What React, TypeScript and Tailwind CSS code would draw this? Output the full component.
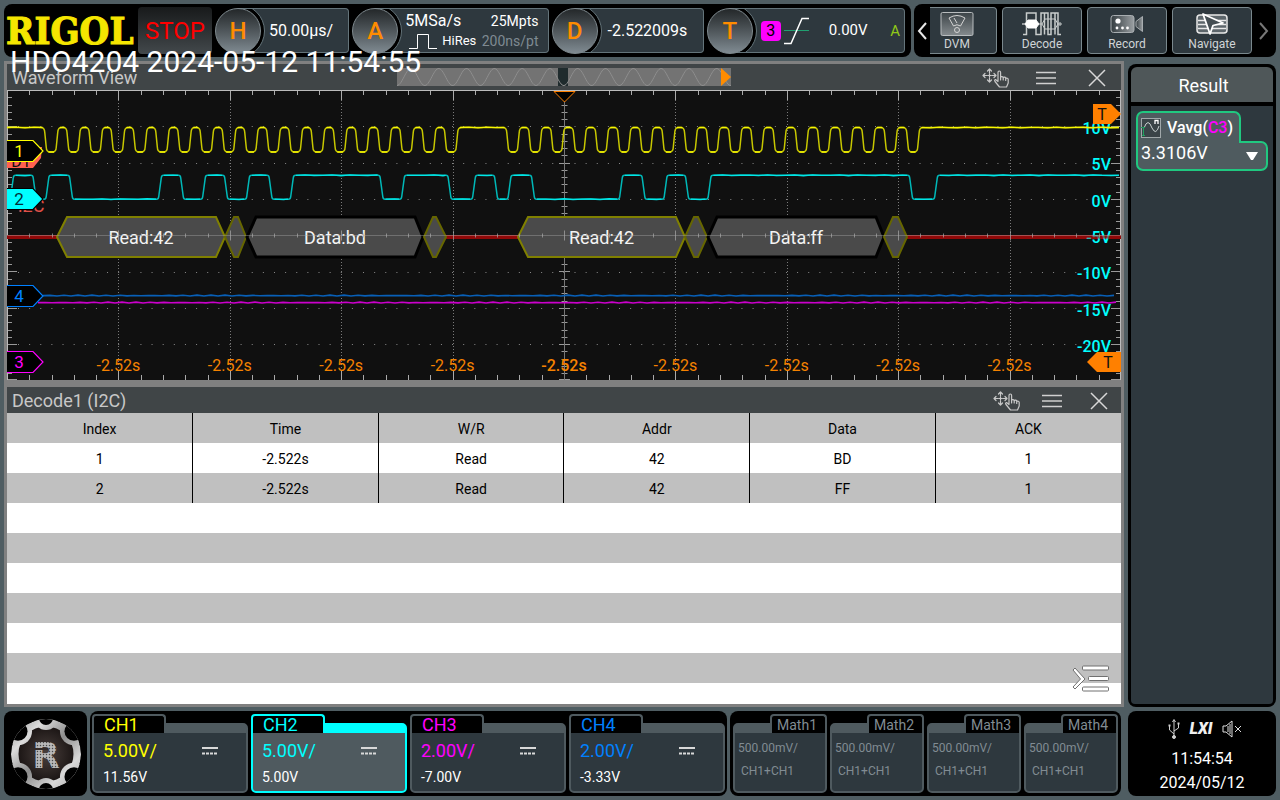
import React from "react";

/* ---------- shared values ---------- */

const PLOT_W = 1114;
const PLOT_H = 290;
const DIV_X = 111.4;
const DIV_Y = 36.3;

const channels = [
  { name: "CH1", scale: "5.00V/", offset: "11.56V", color: "text-[#ffff00]", active: false },
  { name: "CH2", scale: "5.00V/", offset: "5.00V", color: "text-[#00ffff]", active: true },
  { name: "CH3", scale: "2.00V/", offset: "-7.00V", color: "text-[#ff00ff]", active: false },
  { name: "CH4", scale: "2.00V/", offset: "-3.33V", color: "text-[#0080ff]", active: false },
];

const maths = ["Math1", "Math2", "Math3", "Math4"];

const columns = ["Index", "Time", "W/R", "Addr", "Data", "ACK"];
const rows = [
  ["1", "-2.522s", "Read", "42", "BD", "1"],
  ["2", "-2.522s", "Read", "42", "FF", "1"],
];

/* ---------- waveform helpers ---------- */

type Edge = number;

function jitter(i: number) {
  return Math.sin(i * 12.9898) * 0.45;
}

function edgePath(edges: Edge[], startHigh: boolean, hi: number, lo: number, slope: number, round: number) {
  let high = startHigh;
  let d = `M0 ${high ? hi : lo}`;
  for (const x of edges) {
    const from = high ? hi : lo;
    const to = high ? lo : hi;
    const s = Math.sign(to - from) * round * 1.4;
    d += ` L${x - slope - round} ${from} Q${x - slope} ${from} ${x - slope * 0.8} ${from + s}`;
    d += ` L${x + slope * 0.8} ${to - s} Q${x + slope} ${to} ${x + slope + round} ${to}`;
    high = !high;
  }
  return d + ` L${PLOT_W - 2} ${high ? hi : lo}`;
}

function flatPath(edges: Edge[], startHigh: boolean, hi: number, lo: number, pad: number) {
  let high = startHigh;
  let from = 0;
  let d = "";
  [...edges, PLOT_W + pad - 2].forEach((x, i) => {
    const y = high ? hi : lo;
    d += `M${from} ${y}`;
    for (let p = from + 9; p < x - pad; p += 9) d += ` L${p} ${y + jitter(p + i)}`;
    d += ` L${x - pad} ${y} `;
    from = x + pad;
    high = !high;
  });
  return d;
}

function noisyLine(from: number, y: number) {
  let d = `M${from} ${y}`;
  for (let x = from + 7; x < PLOT_W - 2; x += 7) d += ` L${x} ${y + jitter(x)}`;
  return d;
}

const clockEdges: Edge[] = [];
for (let n = 0; n <= 18; n++) clockEdges.push(38.5 + n * 22.22, 50 + n * 22.22);
for (let n = 0; n <= 18; n++) clockEdges.push(500.5 + n * 22.22, 511.5 + n * 22.22);

const dataEdges: Edge[] = [
  5, 27.5, 40.5, 64, 153, 175, 197, 219, 241, 263.5, 285, 374.5, 396, 442.5, 467, 489, 502.5, 526, 614, 636.5,
  658.5, 680, 702.5, 904, 929,
];

/* ---------- graticule ---------- */

function Graticule() {
  const items: React.ReactNode[] = [];
  for (let i = 1; i < 10; i++) {
    const x = Math.round(i * DIV_X) + 0.5;
    if (i !== 5)
      items.push(
        <line key={`v${i}`} x1={x} x2={x} y1={1} y2={PLOT_H} stroke="#7a7a7a" strokeDasharray="1 2" />,
      );
  }
  for (let k = 1; k < 8; k++) {
    if (k === 4) continue;
    const y = Math.round(k * DIV_Y) + 0.5;
    items.push(
      <line key={`h${k}`} x1={11} x2={PLOT_W} y1={y} y2={y} stroke="#8a8a8a" strokeDasharray="1 10.13" />,
    );
  }
  for (let i = 0; i <= 50; i++) {
    const x = Math.min(Math.round((i * DIV_X) / 5) + 0.5, PLOT_W - 0.5);
    const len = i % 5 === 0 ? 10 : 5;
    items.push(<line key={`t${i}`} x1={x} x2={x} y1={0} y2={len} stroke="#aaaaaa" />);
    items.push(<line key={`b${i}`} x1={x} x2={x} y1={PLOT_H - len} y2={PLOT_H} stroke="#aaaaaa" />);
  }
  for (let k = 0; k <= 40; k++) {
    const y = Math.min(Math.round((k * DIV_Y) / 5) + 0.5, PLOT_H - 0.5);
    const len = k % 5 === 0 ? 10 : 5;
    items.push(<line key={`l${k}`} x1={0} x2={len} y1={y} y2={y} stroke="#999999" />);
    items.push(<line key={`r${k}`} x1={PLOT_W - len} x2={PLOT_W} y1={y} y2={y} stroke="#999999" />);
    items.push(<line key={`c${k}`} x1={557 - len / 2} x2={558 + len / 2} y1={y} y2={y} stroke="#999999" />);
  }
  return (
    <g strokeWidth="1">
      {items}
      <line x1="557.5" x2="557.5" y1="0" y2={PLOT_H} stroke="#777777" />
      <line x1="0" x2={PLOT_W} y1="0.5" y2="0.5" stroke="#bbbbbb" />
      <line x1={PLOT_W - 0.5} x2={PLOT_W - 0.5} y1="0" y2={PLOT_H} stroke="#bbbbbb" />
      <line x1="0.5" x2="0.5" y1="0" y2={PLOT_H} stroke="#bbbbbb" />
    </g>
  );
}

function CenterAxis() {
  const ticks: React.ReactNode[] = [];
  for (let i = 1; i < 50; i++) {
    const x = Math.round((i * DIV_X) / 5) + 0.5;
    const h = i % 5 === 0 ? 5 : 2;
    ticks.push(<line key={i} x1={x} x2={x} y1={145.5 - h} y2={145.5 + h} />);
  }
  return (
    <g stroke="#aaaaaa" strokeOpacity="0.7">
      <line x1="0" x2={PLOT_W} y1="145.5" y2="145.5" strokeOpacity="0.4" />
      {ticks}
    </g>
  );
}

type PacketProps = { a: number; b: number; c: number; d: number; stroke: string; width?: number; label?: string };

function Packet({ a, b, c, d, stroke, width = 2, label }: PacketProps) {
  return (
    <g>
      <path
        d={`M${a} 147 L${b} 127 H${c} L${d} 147 L${c} 167 H${b} Z`}
        fill="#4a4a4a"
        stroke={stroke}
        strokeWidth={width}
      />
      {label && (
        <text x={(a + d) / 2} y="154" textAnchor="middle" fontSize="18" fill="#f4f4f4">
          {label}
        </text>
      )}
    </g>
  );
}

function Flag({ y, fill, stroke, text, label }: { y: number; fill: string; stroke: string; text: string; label: string }) {
  return (
    <g>
      <path d={`M0 ${y - 10.5} H26 L36 ${y} L26 ${y + 10.5} H0`} fill={fill} stroke={stroke} strokeWidth="1.2" />
      <text x="12" y={y + 6} textAnchor="middle" fontSize="17" fill={text}>
        {label}
      </text>
    </g>
  );
}

function Plot() {
  const voltages: [string, number][] = [
    ["10V", 44],
    ["5V", 80],
    ["0V", 117],
    ["-5V", 153],
    ["-10V", 189],
    ["-15V", 226],
    ["-20V", 262],
  ];
  return (
    <svg viewBox={`0 0 ${PLOT_W} ${PLOT_H}`} className="block w-full bg-[#101010]" role="img" aria-label="Waveforms">
      <Graticule />
      <path d="M0 145.5 H52 M439 145.5 H512 M900 145.5 H1114" stroke="#a01818" />
      <path d="M0 147.5 H52 M439 147.5 H512 M900 147.5 H1114" stroke="#900808" strokeWidth="3" />
      {voltages.map(([t, y]) => (
        <text key={t} x="1104" y={y} textAnchor="end" fontSize="16" fontWeight="500" fill="#00ffff">
          {t}
        </text>
      ))}
      <path d="M1070 147 H1114" stroke="#900808" strokeWidth="3" strokeOpacity="0.6" />
      <Packet a={50} b={60} c={209} d={218} stroke="#808000" label="Read:42" />
      <Packet a={218} b={227} c={231} d={239} stroke="#666600" />
      <Packet a={240} b={249} c={408} d={416} stroke="#000000" width={3} label="Data:bd" />
      <Packet a={417} b={426} c={429} d={439} stroke="#666600" />
      <Packet a={511} b={521} c={669} d={678} stroke="#808000" label="Read:42" />
      <Packet a={678} b={687} c={691} d={700} stroke="#666600" />
      <Packet a={701} b={710} c={869} d={877} stroke="#000000" width={3} label="Data:ff" />
      <Packet a={877} b={886} c={891} d={900} stroke="#666600" />
      <CenterAxis />

      <g fill="none">
        <path d={noisyLine(31, 212.6)} stroke="#cc00cc" strokeWidth="1.6" />
        <path d={noisyLine(36, 205.6)} stroke="#0860b8" strokeWidth="1.6" />
        <path d={edgePath(dataEdges, false, 85.3, 109.2, 1.6, 1.8)} stroke="#00b8b8" strokeWidth="1.5" />
        <path d={flatPath(dataEdges, false, 85.3, 109.2, 4)} stroke="#00e8e8" strokeWidth="1.3" />
        <path d={edgePath(clockEdges, true, 37.5, 62, 0.9, 3.6)} stroke="#c8c800" strokeWidth="1.5" />
        <path d={flatPath(clockEdges, true, 37.5, 62, 3)} stroke="#f8f800" strokeWidth="1.3" />
      </g>

      {Array.from({ length: 9 }, (_, i) => (
        <text
          key={i}
          x={(i + 1) * DIV_X}
          y="281"
          textAnchor="middle"
          fontSize="16"
          fontWeight={i === 4 ? 500 : 400}
          fill="#f58200"
        >
          -2.52s
        </text>
      ))}

      <path d="M547 1.5 H568 L557.5 12 Z" fill="#000000" stroke="#ff8000" />

      <g>
        <path d="M0 57 H35 L34 68 L26 78 H0 Z" fill="#ff6050" />
        <text x="14" y="77" textAnchor="middle" fontSize="16" fill="#101010">
          D1
        </text>
        <text x="24" y="122" textAnchor="middle" fontSize="18" fill="#e05048">
          I2C
        </text>
      </g>
      <Flag y={61} fill="#000000" stroke="#ffff00" text="#ffff00" label="1" />
      <Flag y={109} fill="#00ffff" stroke="#000000" text="#003038" label="2" />
      <Flag y={206} fill="#000000" stroke="#0080ff" text="#0080ff" label="4" />
      <Flag y={272} fill="#000000" stroke="#ff00ff" text="#ff00ff" label="3" />

      <path d="M1086 14 H1104 L1114 24 L1104 34 H1086 Z" fill="#ff8000" />
      <text x="1095" y="30" textAnchor="middle" fontSize="16" fill="#101010">
        T
      </text>
      <path d="M1114 262 H1090 L1080 272 L1090 282 H1114 Z" fill="#ff8000" />
      <text x="1101" y="278" textAnchor="middle" fontSize="16" fill="#101010">
        T
      </text>
    </svg>
  );
}

/* ---------- icons ---------- */

function MoveHandIcon() {
  return (
    <svg width="28" height="20" viewBox="0 0 28 20" fill="none" stroke="#c8c8c8" strokeWidth="1.2" strokeLinejoin="round" strokeLinecap="round">
      <path d="M7.500 1 V5 M7.500 10 V14 M1 7.500 H5 M10 7.500 H14 M6 7.500 H9 M7.500 6 V9 M5.500 3 L7.500 1 L9.500 3 M5.500 12 L7.500 14 L9.500 12 M3 5.500 L1 7.500 L3 9.500 M12 5.500 L14 7.500 L12 9.500" />
      <path d="M17.500 19 L13 13.500 Q12 12 13.500 11.500 L16 13.500 V4.500 Q16 3 17.300 3 T18.600 4.500 V9.500 Q18.800 8.500 20 8.600 T21.200 10 Q21.500 9 22.700 9.200 T23.700 10.600 Q24.300 9.800 25.300 10.200 T26.200 11.500 V15 L24.500 19 Z M18.600 9.500 V12 M21.200 10 V12 M23.700 10.600 V12.500" />
    </svg>
  );
}

function WindowControls({ name, compact = false }: { name: string; compact?: boolean }) {
  return (
    <>
      <button aria-label={`Move ${name}`}>
        <MoveHandIcon />
      </button>
      <button aria-label={`${name} menu`} className={compact ? "ml-[21px]" : "ml-[26px]"}>
        <svg width="20" height="14" viewBox="0 0 20 14" stroke="#d0d0d0" strokeWidth="1.5">
          <path d="M0 1.500 H20 M0 7 H20 M0 12.500 H20" />
        </svg>
      </button>
      <button aria-label={`Close ${name}`} className={compact ? "ml-[28px]" : "ml-[32px]"}>
        <svg width="18" height="18" viewBox="0 0 18 18" stroke="#d8d8d8" strokeWidth="1.5">
          <path d="M1 1 L17 17 M17 1 L1 17" />
        </svg>
      </button>
    </>
  );
}

function DvmIcon() {
  return (
    <svg width="34" height="24" viewBox="0 0 34 24" fill="none">
      <defs>
        <linearGradient id="meter" x1="0" x2="0" y1="0" y2="1">
          <stop offset="0" stopColor="#3c4448" />
          <stop offset="1" stopColor="#858b8e" />
        </linearGradient>
      </defs>
      <rect x="1" y="0.500" width="32" height="23" rx="1.500" fill="url(#meter)" stroke="#b8bcbe" />
      <path d="M9 6 Q17 1 25 6 L20.500 14 Q17 11.500 13.500 14 Z" stroke="#d4d4d4" strokeLinejoin="round" />
      <path d="M14 6 L17 11" stroke="#d4d4d4" />
      <circle cx="17" cy="18" r="2.500" stroke="#d4d4d4" />
    </svg>
  );
}

function DecodeIcon() {
  return (
    <svg width="40" height="24" viewBox="0 0 40 24" fill="none" stroke="#c8cccc">
      <path d="M1 22.500 H4.500 V1 H14 V22.500 H19 V1 H26 V22.500 H29 V1 H36 V22.500 H39 M22.500 1 V22.500 M33 1 V22.500" strokeWidth="1.500" />
      <path d="M0 12 H3 L6 8 H14 L17 12 L14 16 H6 L3 12" fill="#ffffff" stroke="#ffffff" />
      <path d="M17 12 H20 L23 7 H33 L36 12 L33 17 H23 L20 12 M36 12 H40 M38 10 V14" strokeWidth="1" />
    </svg>
  );
}

function RecordIcon() {
  return (
    <svg width="34" height="18" viewBox="0 0 34 18" fill="none">
      <defs>
        <linearGradient id="camera" x1="0" x2="1">
          <stop offset="0" stopColor="#343c40" />
          <stop offset="1" stopColor="#9a9fa2" />
        </linearGradient>
      </defs>
      <rect x="1" y="0.500" width="23" height="17" rx="2.500" fill="url(#camera)" stroke="#a8adb0" />
      <path d="M26 6.500 L32.500 1.500 V16.500 L26 11.500 Z" fill="url(#camera)" stroke="#a8adb0" />
      <circle cx="8" cy="6" r="2.600" fill="#ffffff" />
      <g fill="#ffffff">
        <circle cx="7" cy="13" r="1.400" />
        <circle cx="12.500" cy="13" r="1.400" />
        <circle cx="17.500" cy="13" r="1.400" />
      </g>
    </svg>
  );
}

function NavigateIcon() {
  return (
    <svg width="34" height="22" viewBox="0 0 34 22" fill="none" stroke="#e8e8e8">
      <rect x="2" y="2" width="30" height="18" rx="3" fill="#5d666b" strokeWidth="1.500" />
      <path d="M3 7.500 H31 M3 11.500 H31 M3 15.500 H31" strokeWidth="1.300" />
      <path d="M8 1 L28 10 L18 12.500 L15 21 Z" fill="#454e53" stroke="#ffffff" strokeWidth="1.800" strokeLinejoin="round" />
    </svg>
  );
}

function GearLogo() {
  const angles = [90, 270, 39, 141, 219, 321];
  const at = (a: number, r: number) => ({
    cx: 36 + r * Math.cos((a * Math.PI) / 180),
    cy: 36 + r * Math.sin((a * Math.PI) / 180),
  });
  return (
    <svg width="72" height="72" viewBox="0 0 72 72">
      <defs>
        <linearGradient id="steel" gradientUnits="userSpaceOnUse" x1="0" x2="72" y1="0" y2="72">
          <stop offset="0" stopColor="#8a8a8a" />
          <stop offset="0.25" stopColor="#dcdcdc" />
          <stop offset="0.5" stopColor="#8c8c8c" />
          <stop offset="0.75" stopColor="#d8d8d8" />
          <stop offset="1" stopColor="#a0a0a0" />
        </linearGradient>
        <radialGradient id="core">
          <stop offset="0" stopColor="#4a403d" />
          <stop offset="1" stopColor="#1c1615" />
        </radialGradient>
        <clipPath id="disc">
          <circle cx="36" cy="36" r="35" />
        </clipPath>
        <pattern id="mesh" width="3" height="3" patternUnits="userSpaceOnUse">
          <rect width="3" height="3" fill="#a8a8a8" />
          <rect width="1" height="1" fill="#484848" />
          <rect x="1.500" y="1.500" width="1" height="1" fill="#e8e8e8" />
        </pattern>
      </defs>
      <g clipPath="url(#disc)">
        <circle cx="36" cy="36" r="35" fill="url(#steel)" />
        <circle cx="36" cy="36" r="27.500" fill="url(#core)" />
        {angles.map((a) => (
          <circle key={a} {...at(a, 36)} r={a % 90 ? 14 : 12} fill="url(#steel)" />
        ))}
        {angles.map((a) => (
          <circle key={a} {...at(a, 36)} r={a % 90 ? 9.5 : 7} fill="#000000" />
        ))}
      </g>
      <text x="36" y="50" textAnchor="middle" fontSize="36" fontWeight="700" fill="url(#mesh)" fontFamily="DejaVu Sans">
        R
      </text>
      <path d="M20 31 H38" stroke="#332b29" strokeWidth="2" />
    </svg>
  );
}

/* ---------- top bar ---------- */

function Knob({ letter, label, basis, children }: { letter: string; label: string; basis: string; children: React.ReactNode }) {
  return (
    <div className={`flex grow items-center ${basis}`}>
      <button
        aria-label={label}
        className="z-10 flex size-[46px] shrink-0 items-center justify-center rounded-full border border-[#7f8a8f] bg-linear-to-b from-[#24282a] to-[#808b92] text-2xl font-medium text-[#ff8c00]"
      >
        {letter}
      </button>
      <div className="relative -ml-[23px] flex h-[45px] grow items-center overflow-hidden rounded-r-[4px] border border-l-0 border-[#64747a] bg-[#2e383e] pl-[31px]">
        <span className="absolute top-1/2 -left-[27px] size-[54px] -translate-y-1/2 rounded-full border border-[#64747a] bg-black" />
        {children}
      </div>
    </div>
  );
}

function ToolButton({ label, icon, className }: { label: string; icon: React.ReactNode; className: string }) {
  return (
    <button
      className={`flex h-[47px] flex-col items-center justify-between border border-[#7a888d] bg-[#2e383e] pt-1 pb-[2px] text-xs leading-[14px] text-[#d0d4d6] ${className}`}
    >
      <span className="flex h-6 items-center">{icon}</span>
      {label}
    </button>
  );
}

function TopBar() {
  return (
    <header className="flex gap-[3px]">
      <div className="flex h-[53px] grow items-center gap-[3px] rounded-[8px] bg-black pr-[6px]">
        <div className="-mr-[3px] w-[134px] pl-[2px] font-['DejaVu_Serif_Condensed','DejaVu_Serif',serif] text-[38px] leading-none font-bold text-[#f5e600] [-webkit-text-stroke:1px_#f5e600]">
          RIGOL
        </div>
        <button className="h-[47px] w-[74px] rounded-[4px] bg-linear-to-b from-[#181a1b] to-[#43494c] pt-px text-2xl text-[#ff0000]">
          STOP
        </button>
        <Knob letter="H" label="Horizontal" basis="basis-[134px]">
          50.00µs/
        </Knob>
        <Knob letter="A" label="Acquire" basis="basis-[196px]">
          <div className="-ml-px flex grow flex-col pt-px pr-[9px] leading-5">
            <div className="flex items-baseline justify-between">
              <span>5MSa/s</span>
              <span className="text-sm leading-5">25Mpts</span>
            </div>
            <div className="flex items-center justify-between">
              <span className="flex items-center gap-[5px] pl-1 text-[13px] leading-5">
                <svg width="28" height="15" viewBox="0 0 28 15" fill="none" stroke="#ffffff">
                  <path d="M0 14.500 H8.500 V0.500 H19.500 V14.500 H28" />
                </svg>
                HiRes
              </span>
              <span className="text-sm leading-5 text-[#7f8a92]">200ns/pt</span>
            </div>
          </div>
        </Knob>
        <Knob letter="D" label="Delay" basis="basis-[152px]">
          <span className="pl-[2px]">-2.522009s</span>
        </Knob>
        <Knob letter="T" label="Trigger" basis="basis-[198px]">
          <span className="flex size-5 items-center justify-center rounded-[4px] bg-[#ff00ff] pt-px text-black">3</span>
          <svg className="ml-[3px]" width="26" height="28" viewBox="0 0 26 28" fill="none">
            <path d="M0 13.500 H25" stroke="#20a070" />
            <path d="M0 26.500 H7 L18 1.500 H25" stroke="#ffffff" strokeWidth="1.500" />
          </svg>
          <span className="ml-[19px] text-[15px]">0.00V</span>
          <span className="mr-1 ml-auto pt-px text-[15px] text-[#90c818]">A</span>
        </Knob>
      </div>
      <nav className="flex h-[53px] w-[362px] shrink-0 items-center rounded-[8px] bg-black">
        <button aria-label="Previous tools" className="flex w-4 shrink-0 justify-center">
          <svg width="10" height="18" viewBox="0 0 10 18" fill="none" stroke="#e8e8e8" strokeWidth="2">
            <path d="M9 1 L2 9 L9 17" />
          </svg>
        </button>
        <div className="flex grow gap-[5px]">
          <ToolButton label="DVM" icon={<DvmIcon />} className="w-[67px] rounded-r-[4px] border-l-0 pr-3" />
          <ToolButton label="Decode" icon={<DecodeIcon />} className="flex-1 rounded-[4px]" />
          <ToolButton label="Record" icon={<RecordIcon />} className="flex-1 rounded-[4px]" />
          <ToolButton label="Navigate" icon={<NavigateIcon />} className="flex-1 rounded-[4px]" />
        </div>
        <button aria-label="Next tools" className="flex w-6 shrink-0 justify-center">
          <svg width="10" height="18" viewBox="0 0 10 18" fill="none" stroke="#777777" strokeWidth="2">
            <path d="M1 1 L8 9 L1 17" />
          </svg>
        </button>
      </nav>
    </header>
  );
}

/* ---------- main panels ---------- */

function Overview() {
  let d = "";
  for (let x = 0; x <= 334; x += 1) d += `${x ? "L" : "M"}${x} ${(9 + 8.5 * Math.cos((x / 27.8) * 2 * Math.PI)).toFixed(1)} `;
  return (
    <svg width="334" height="18" viewBox="0 0 334 18" fill="none" role="img" aria-label="Record memory">
      <rect width="334" height="18" fill="#737373" />
      <rect x="161" width="10" height="18" fill="#1f2b2d" />
      <path d={d} stroke="#8e8e8e" />
      <path d="M324 0 L334 9 L324 18 Z" fill="#ff8c00" />
    </svg>
  );
}

function WaveformPanel() {
  return (
    <section>
      <div className="grid h-[26px] grid-cols-[1fr_auto_1fr] items-center bg-[#404547]">
        <h2 className="pt-[2px] pl-[5px] text-lg leading-6 text-[#c8c8c8]">Waveform View</h2>
        <Overview />
        <div className="flex items-center justify-end pt-[2px] pr-[15px]">
          <WindowControls name="waveform view" />
        </div>
      </div>
      <Plot />
    </section>
  );
}

function DecodePanel() {
  return (
    <section className="relative flex grow flex-col bg-white text-black">
      <div className="flex h-[26px] items-center justify-between bg-[#404547] pt-[2px] pr-[13px] pl-[5px]">
        <h2 className="text-lg leading-6 text-[#c8c8c8]">Decode1 (I2C)</h2>
        <div className="flex items-center">
          <WindowControls name="decode" compact />
        </div>
      </div>
      <table className="w-full table-fixed border-collapse text-center text-sm">
        <thead>
          <tr className="h-[30px] bg-[#c0c0c0]">
            {columns.map((c) => (
              <th key={c} className="border-r border-black p-0 pt-[2px] font-normal last:border-r-0">
                {c}
              </th>
            ))}
          </tr>
        </thead>
        <tbody>
          {rows.map((r) => (
            <tr key={r[0]} className="h-[30px] even:bg-[#c0c0c0]">
              {r.map((v, i) => (
                <td key={i} className="border-r border-black p-0 pt-[2px] last:border-r-0">
                  {v}
                </td>
              ))}
            </tr>
          ))}
          {[0, 1, 2, 3, 4, 5].map((n) => (
            <tr key={n} className="h-[30px] even:bg-[#c0c0c0]">
              <td colSpan={6} className="p-0" />
            </tr>
          ))}
        </tbody>
      </table>
      <button aria-label="Expand list" className="absolute right-[11px] bottom-[11px]">
        <svg width="38" height="28" viewBox="0 0 38 28" fill="#ffffff" stroke="#707070">
          <path d="M3 3 L13 14 L3 24 L1 22 L8.500 14 L1 5 Z" />
          <rect x="10.500" y="1" width="26" height="4" rx="1" />
          <rect x="16.500" y="11.500" width="20" height="4" rx="1" />
          <rect x="10.500" y="22" width="26" height="4" rx="1" />
        </svg>
      </button>
    </section>
  );
}

function ResultPanel() {
  return (
    <aside className="mt-[3px] flex w-[148px] shrink-0 flex-col gap-1 rounded-[8px] bg-black p-[3px]">
      <h2 className="flex h-[35px] items-center justify-center rounded-t-[6px] bg-[#4f5759] pt-[2px] pl-[3px] text-lg text-white">Result</h2>
      <div className="grow rounded-b-[4px] bg-[#2e383e] p-[5px]">
        <div className="relative z-10 -mb-[2px] flex h-8 w-[105px] items-center gap-[6px] rounded-t-[7px] border-2 border-b-0 border-[#20c880] bg-[#4f5b5f] pl-[3px] text-base font-medium">
          <svg width="20" height="20" viewBox="0 0 20 20" fill="none">
            <rect x="0.500" y="0.500" width="19" height="19" stroke="#a0a8aa" fill="#3a4448" />
            <path d="M3 10 Q7 -1 11 10 Q15 18 18 8" stroke="#c8d0d0" />
            <path d="M0 9.500 H4 M2.500 10 V17 M1 17.500 H4" stroke="#20a060" />
            <path d="M14 6 V2.500 H17 V6" stroke="#ffffff" strokeWidth="1.300" />
          </svg>
          <span>
            Vavg(<span className="text-[#ff00ff]">C3</span>)
          </span>
        </div>
        <button className="flex h-[30px] w-full items-center justify-between rounded-r-[7px] rounded-bl-[7px] border-2 border-[#20c880] bg-[#4f5b5f] pr-2 pl-[3px] text-lg leading-none">
          <span className="pb-[6px]">3.3106V</span>
          <svg width="12" height="8" viewBox="0 0 12 8" fill="#ffffff">
            <path d="M0 0 H12 L7 8 H5 Z" />
          </svg>
        </button>
      </div>
    </aside>
  );
}

/* ---------- bottom bar ---------- */

function ChannelCard({ name, scale, offset, color, active }: (typeof channels)[number]) {
  const border = active ? "border-[#00ffff]" : "border-[#4f5a5f]";
  return (
    <button className="relative flex flex-1 flex-col pt-[9px] text-left">
      <span className={`absolute top-0 left-0 z-10 h-[19px] w-[74px] rounded-t-[4px] border-2 border-b-0 bg-black pl-[10px] text-lg leading-[18px] ${border} ${color}`}>
        {name}
      </span>
      <span className={`flex w-full grow flex-col rounded-[5px] border-2 border-t-[10px] pt-[6px] pl-[9px] ${border} ${active ? "bg-[#4f5a5f]" : "bg-[#2e383e]"}`}>
        <span className={`flex items-center justify-between pr-[28px] text-lg leading-6 ${color}`}>
          {scale}
          <svg width="16" height="8" viewBox="0 0 16 8" stroke="#d8d8d8">
            <path d="M0 1 H16" strokeWidth="2" />
            <path d="M0 6.500 H16" strokeWidth="2" strokeDasharray="3 1" />
          </svg>
        </span>
        <span className="pt-px text-sm leading-[26px] text-white">{offset}</span>
      </span>
    </button>
  );
}

function MathCard({ name }: { name: string }) {
  return (
    <button className="relative flex flex-1 flex-col pt-[9px] text-left text-[#818c93]">
      <span className="absolute top-0 right-0 z-10 h-[19px] w-[57px] rounded-t-[4px] border-2 border-b-0 border-[#4f5a5f] bg-black pl-[5px] text-sm leading-[18px]">
        {name}
      </span>
      <span className="flex w-full grow flex-col rounded-[5px] border-2 border-t-[10px] border-[#4f5a5f] bg-[#2e383e] pt-1 pl-[3px] text-xs leading-[23px]">
        <span>500.00mV/</span>
        <span className="pl-[3px]">CH1+CH1</span>
      </span>
    </button>
  );
}

function BottomBar() {
  return (
    <footer className="flex h-[85px] gap-[3px]">
      <button aria-label="Main menu" className="flex w-[83px] shrink-0 items-center justify-center rounded-[8px] bg-black">
        <GearLogo />
      </button>
      <div className="flex grow-[5] basis-[637px] gap-[3px] rounded-[8px] bg-black px-[2px] py-[3px]">
        {channels.map((c) => (
          <ChannelCard key={c.name} {...c} />
        ))}
      </div>
      <div className="flex grow-[3] basis-[391px] gap-[3px] rounded-[8px] bg-black p-[3px]">
        {maths.map((m) => (
          <MathCard key={m} name={m} />
        ))}
      </div>
      <div className="ml-1 flex w-[148px] shrink-0 flex-col items-center rounded-[8px] bg-black pt-[6px] text-base leading-6">
        <div className="mb-[6px] flex h-6 items-center gap-[9px] pl-[6px]">
          <svg width="12" height="20" viewBox="0 0 12 20" fill="none" stroke="#d0d0d0">
            <path d="M6 2 V18 M6 15 L1.500 11 V7 M6 12 L10.500 9 V5 M4.500 3 L6 0.500 L7.500 3" />
            <circle cx="6" cy="18" r="1.500" fill="#d0d0d0" />
            <path d="M0.500 6.500 H2.500 M9.500 4.500 H11.500" strokeWidth="2" />
          </svg>
          <span className="text-base leading-6 font-black text-[#f0f0f0] italic">LXI</span>
          <svg width="20" height="18" viewBox="0 0 20 18" fill="none" stroke="#e0e0e0">
            <path d="M1 6 H4 L10 1 V17 L4 12 H1 Z M6 6 V12 M8 4 V14 M13 6 L19 12 M19 6 L13 12" />
          </svg>
        </div>
        <time>11:54:54</time>
        <time>2024/05/12</time>
      </div>
    </footer>
  );
}

export default function App() {
  return (
    <div className="relative flex min-h-screen flex-col gap-1 bg-[#4f5d62] p-1 font-['Roboto',sans-serif] text-base text-white">
      <TopBar />
      <div className="flex grow gap-1">
        <main className="flex min-w-0 grow flex-col gap-[7px] border-[3px] border-[#808080] bg-[#808080]">
          <WaveformPanel />
          <DecodePanel />
        </main>
        <ResultPanel />
      </div>
      <BottomBar />
      <p className="pointer-events-none absolute top-[44px] left-[10px] z-20 text-[30px] leading-9">
        HDO4204 2024-05-12 11:54:55
      </p>
    </div>
  );
}
